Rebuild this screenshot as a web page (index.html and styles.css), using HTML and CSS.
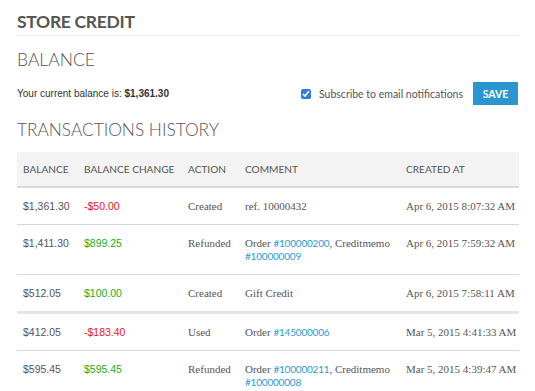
FILE: index.html
```html
<!DOCTYPE html>
<html lang="en">
<head>
  <meta charset="UTF-8">
  <meta name="viewport" content="width=device-width, initial-scale=1.0">
  <title>Store Credit</title>
  <link rel="stylesheet" href="styles.css">
</head>
<body>
  <div class="page">
    <h1 class="page-title">Store Credit</h1>

    <h2 class="section-title">Balance</h2>
    <div class="balance-row">
      <p class="balance-text">Your current balance is: <strong>$1,361.30</strong></p>
      <label class="subscribe">
        <input type="checkbox" checked> Subscribe to email notifications
      </label>
      <button class="btn">Save</button>
    </div>

    <h2 class="section-title history-title">Transactions History</h2>
    <table class="history">
      <colgroup>
        <col style="width: 61px">
        <col style="width: 104px">
        <col style="width: 57px">
        <col style="width: 161px">
        <col>
      </colgroup>
      <thead>
        <tr>
          <th>Balance</th>
          <th>Balance Change</th>
          <th>Action</th>
          <th>Comment</th>
          <th>Created At</th>
        </tr>
      </thead>
      <tbody>
        <tr>
          <td class="amount">$1,361.30</td>
          <td class="amount minus">-$50.00</td>
          <td>Created</td>
          <td class="comment">ref. 10000432</td>
          <td class="date">Apr 6, 2015 8:07:32 AM</td>
        </tr>
        <tr>
          <td class="amount">$1,411.30</td>
          <td class="amount plus">$899.25</td>
          <td>Refunded</td>
          <td class="comment">Order <a href="#">#100000200</a>, Creditmemo <a href="#">#100000009</a></td>
          <td class="date">Apr 6, 2015 7:59:32 AM</td>
        </tr>
        <tr class="gap">
          <td class="amount">$512.05</td>
          <td class="amount plus">$100.00</td>
          <td>Created</td>
          <td class="comment">Gift Credit</td>
          <td class="date">Apr 6, 2015 7:58:11 AM</td>
        </tr>
        <tr>
          <td class="amount">$412.05</td>
          <td class="amount minus">-$183.40</td>
          <td>Used</td>
          <td class="comment">Order <a href="#">#145000006</a></td>
          <td class="date">Mar 5, 2015 4:41:33 AM</td>
        </tr>
        <tr>
          <td class="amount">$595.45</td>
          <td class="amount plus">$595.45</td>
          <td>Refunded</td>
          <td class="comment">Order <a href="#">#100000211</a>, Creditmemo <a href="#">#100000008</a></td>
          <td class="date">Mar 5, 2015 4:39:47 AM</td>
        </tr>
      </tbody>
    </table>
  </div>
</body>
</html>
```

FILE: styles.css
```css
body {
  margin: 0;
  background: #fff;
  color: #555;
  font-family: Lato, "Open Sans", sans-serif;
}

.page {
  padding: 11px 16px 0 17px;
}

.page-title {
  margin: 0;
  padding-bottom: 2px;
  font-size: 17.5px;
  line-height: 22px;
  font-weight: 700;
  letter-spacing: -0.3px;
  text-transform: uppercase;
  color: #555;
  border-bottom: 1px solid #ececec;
}

.section-title {
  margin: 12px 0 0;
  font-size: 17.5px;
  line-height: 23px;
  font-weight: 300;
  text-transform: uppercase;
  color: #555;
}

.history-title {
  margin-top: 14px;
  font-size: 17.3px;
  line-height: 22px;
}

.balance-row {
  display: flex;
  align-items: center;
  height: 23px;
  margin-top: 11px;
}

.balance-text {
  flex: 1;
  margin: 0;
  font-family: "Liberation Sans", Arial, sans-serif;
  font-size: 10px;
  color: #333;
}

.subscribe {
  display: flex;
  align-items: center;
  font-size: 10.5px;
  color: #555;
}

.subscribe input {
  width: 10px;
  height: 10px;
  margin: 0 8px 0 0;
  accent-color: #2b7de0;
}

.btn {
  margin-left: 10px;
  margin-right: 1px;
  width: 45px;
  height: 23px;
  padding: 0;
  border: none;
  background: #2a96d0;
  color: #fff;
  font-family: Lato, sans-serif;
  font-size: 10.5px;
  font-weight: 700;
  text-transform: uppercase;
}

.history {
  width: 502px;
  margin-top: 11px;
  border-collapse: collapse;
  table-layout: fixed;
}

.history th {
  height: 34px;
  padding: 0 6px;
  background: #f3f3f3;
  border-bottom: 2px solid #d9d9d9;
  text-align: left;
  white-space: nowrap;
  font-size: 10.1px;
  font-weight: 400;
  text-transform: uppercase;
  color: #555;
}

.history td {
  padding: 12px 6px 11px;
  vertical-align: top;
  line-height: 13px;
  font-family: "Liberation Serif", Georgia, serif;
  font-size: 11px;
  color: #555;
  border-bottom: 1px solid #d6d6d6;
}

.history tr:last-child td {
  border-bottom: none;
}

.history tr.gap td {
  border-bottom: 3px solid #e6e6e6;
}

.history td.amount {
  font-family: "Liberation Sans", Arial, sans-serif;
  font-size: 10.5px;
  color: #555;
}

.history td.minus {
  color: #f0141e;
}

.history td.plus {
  color: #16b016;
}

.history td.comment {
  padding-right: 0;
}

.history td.date {
  white-space: nowrap;
}

.history a {
  color: #2b9ad6;
  font-family: Lato, sans-serif;
  font-size: 10px;
  letter-spacing: -0.2px;
  text-decoration: none;
}
```
